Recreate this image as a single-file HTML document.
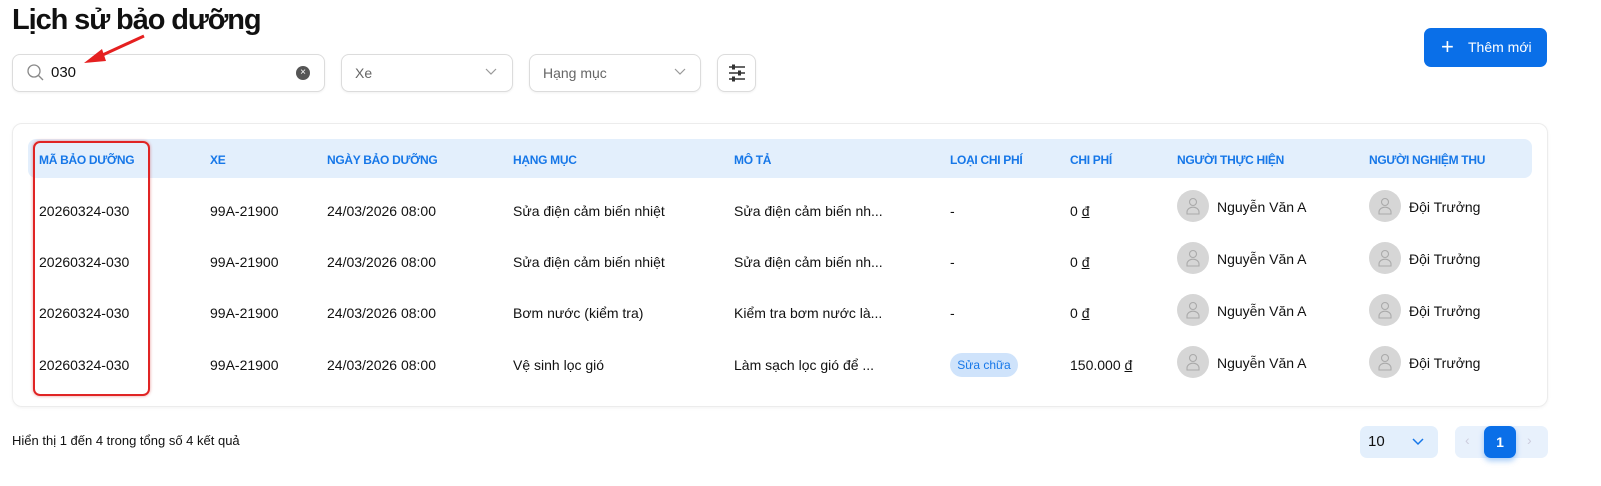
<!DOCTYPE html><html><head><meta charset="utf-8"><style>
*{box-sizing:border-box;margin:0;padding:0}
body{width:1601px;height:486px;background:#fff;font-family:"Liberation Sans",sans-serif;color:#1a1a1a;position:relative;overflow:hidden}
.a{position:absolute}
h1{position:absolute;left:12px;top:4px;font-size:29px;font-weight:bold;letter-spacing:-1.1px;color:#111}
.box{position:absolute;border:1.5px solid #dcdcdc;border-radius:8px;background:#fff;box-shadow:0 1px 2px rgba(0,0,0,.06)}
.ph{font-size:14px;color:#666}
.hd{font-size:12px;font-weight:bold;letter-spacing:-0.3px;color:#1677e8;position:absolute;top:153px}
.c{position:absolute;font-size:14px;color:#111}
.av{position:absolute;width:32px;height:32px;border-radius:50%;background:#d6d6d6}
.av svg{position:absolute;left:8px;top:7px}
</style></head><body>
<h1>Lịch sử bảo dưỡng</h1>
<div class="box" style="left:12px;top:54px;width:313px;height:38px"></div>
<svg class="a" style="left:26px;top:63px" width="20" height="20" viewBox="0 0 20 20"><circle cx="8" cy="8" r="6" fill="none" stroke="#888" stroke-width="1.3"/><path d="M12.5 12.5L17 17" stroke="#888" stroke-width="1.3"/></svg>
<div class="c" style="left:51px;top:64px;font-size:15px">030</div>
<div class="a" style="left:296px;top:66px;width:14px;height:14px;border-radius:50%;background:#555;color:#fff;font-size:10px;text-align:center;line-height:14px">×</div>
<div class="box" style="left:341px;top:54px;width:172px;height:38px"></div>
<div class="a ph" style="left:355px;top:65px">Xe</div>
<svg class="a" style="left:485px;top:68px" width="12" height="8"><path d="M1 1l5 5 5-5" fill="none" stroke="#999" stroke-width="1.2"/></svg>
<div class="box" style="left:529px;top:54px;width:172px;height:38px"></div>
<div class="a ph" style="left:543px;top:65px">Hạng mục</div>
<svg class="a" style="left:674px;top:68px" width="12" height="8"><path d="M1 1l5 5 5-5" fill="none" stroke="#999" stroke-width="1.2"/></svg>
<div class="box" style="left:717px;top:54px;width:39px;height:38px"></div>
<svg class="a" style="left:727px;top:63px" width="20" height="20"><g stroke="#333" stroke-width="1.5"><path d="M2 4h16M2 10h16M2 16h16"/></g><g fill="#333"><rect x="5" y="1.5" width="3" height="5"/><rect x="11" y="7.5" width="3" height="5"/><rect x="5" y="13.5" width="3" height="5"/></g></svg>
<div class="a" style="left:1424px;top:28px;width:123px;height:39px;background:#0a6fe8;border-radius:7px;color:#fff;font-size:14px;line-height:39px"><span style="position:absolute;left:17px;top:-1px;font-size:22px">+</span><span style="position:absolute;left:44px">Thêm mới</span></div>
<div class="a" style="left:12px;top:123px;width:1536px;height:284px;border:1px solid #ececec;border-radius:10px;box-shadow:0 1px 3px rgba(0,0,0,.05)"></div>
<div class="a" style="left:28px;top:139px;width:1504px;height:39px;background:#e3effc;border-radius:8px"></div>
<div class="hd" style="left:39px">MÃ BẢO DƯỠNG</div><div class="hd" style="left:210px">XE</div><div class="hd" style="left:327px">NGÀY BẢO DƯỠNG</div><div class="hd" style="left:513px">HẠNG MỤC</div><div class="hd" style="left:734px">MÔ TẢ</div><div class="hd" style="left:950px">LOẠI CHI PHÍ</div><div class="hd" style="left:1070px">CHI PHÍ</div><div class="hd" style="left:1177px">NGƯỜI THỰC HIỆN</div><div class="hd" style="left:1369px">NGƯỜI NGHIỆM THU</div>
<div class="c" style="left:39px;top:203px">20260324-030</div><div class="c" style="left:210px;top:203px">99A-21900</div><div class="c" style="left:327px;top:203px">24/03/2026 08:00</div><div class="c" style="left:513px;top:203px">Sửa điện cảm biến nhiệt</div><div class="c" style="left:734px;top:203px">Sửa điện cảm biến nh...</div><div class="c" style="left:950px;top:203px">-</div><div class="c" style="left:1070px;top:203px">0 <u>đ</u></div>
<div class="c" style="left:39px;top:254px">20260324-030</div><div class="c" style="left:210px;top:254px">99A-21900</div><div class="c" style="left:327px;top:254px">24/03/2026 08:00</div><div class="c" style="left:513px;top:254px">Sửa điện cảm biến nhiệt</div><div class="c" style="left:734px;top:254px">Sửa điện cảm biến nh...</div><div class="c" style="left:950px;top:254px">-</div><div class="c" style="left:1070px;top:254px">0 <u>đ</u></div>
<div class="c" style="left:39px;top:305px">20260324-030</div><div class="c" style="left:210px;top:305px">99A-21900</div><div class="c" style="left:327px;top:305px">24/03/2026 08:00</div><div class="c" style="left:513px;top:305px">Bơm nước (kiểm tra)</div><div class="c" style="left:734px;top:305px">Kiểm tra bơm nước là...</div><div class="c" style="left:950px;top:305px">-</div><div class="c" style="left:1070px;top:305px">0 <u>đ</u></div>
<div class="c" style="left:39px;top:357px">20260324-030</div><div class="c" style="left:210px;top:357px">99A-21900</div><div class="c" style="left:327px;top:357px">24/03/2026 08:00</div><div class="c" style="left:513px;top:357px">Vệ sinh lọc gió</div><div class="c" style="left:734px;top:357px">Làm sạch lọc gió để ...</div><div class="a" style="left:950px;top:353px;width:68px;height:24px;border-radius:12px;background:#cfe3fb;color:#1677e8;font-size:12px;text-align:center;line-height:24px">Sửa chữa</div><div class="c" style="left:1070px;top:357px">150.000 <u>đ</u></div>
<svg width="0" height="0" style="position:absolute"><defs><g id="p"><circle cx="8" cy="5" r="3.5" fill="none" stroke="#aaa" stroke-width="1.1"/><path d="M2 17v-2a5 4 0 0 1 12 0v2z" fill="none" stroke="#aaa" stroke-width="1.1"/></g></defs></svg>
<div class="av" style="left:1177px;top:190px"><svg width="16" height="18"><use href="#p"/></svg></div><div class="c" style="left:1217px;top:199px">Nguyễn Văn A</div><div class="av" style="left:1369px;top:190px"><svg width="16" height="18"><use href="#p"/></svg></div><div class="c" style="left:1409px;top:199px">Đội Trưởng</div>
<div class="av" style="left:1177px;top:242px"><svg width="16" height="18"><use href="#p"/></svg></div><div class="c" style="left:1217px;top:251px">Nguyễn Văn A</div><div class="av" style="left:1369px;top:242px"><svg width="16" height="18"><use href="#p"/></svg></div><div class="c" style="left:1409px;top:251px">Đội Trưởng</div>
<div class="av" style="left:1177px;top:294px"><svg width="16" height="18"><use href="#p"/></svg></div><div class="c" style="left:1217px;top:303px">Nguyễn Văn A</div><div class="av" style="left:1369px;top:294px"><svg width="16" height="18"><use href="#p"/></svg></div><div class="c" style="left:1409px;top:303px">Đội Trưởng</div>
<div class="av" style="left:1177px;top:346px"><svg width="16" height="18"><use href="#p"/></svg></div><div class="c" style="left:1217px;top:355px">Nguyễn Văn A</div><div class="av" style="left:1369px;top:346px"><svg width="16" height="18"><use href="#p"/></svg></div><div class="c" style="left:1409px;top:355px">Đội Trưởng</div>
<div class="a" style="left:33px;top:141px;width:117px;height:255px;border:2.5px solid #e02424;border-radius:7px;box-shadow:0 0 3px rgba(200,0,0,.4)"></div>
<svg class="a" style="left:80px;top:30px" width="70" height="40"><path d="M64 6L16 28" stroke="#e52020" stroke-width="3"/><path d="M4 33L22 19L26 31z" fill="#e52020"/></svg>
<div class="c" style="left:12px;top:433px;font-size:13px">Hiển thị 1 đến 4 trong tổng số 4 kết quả</div>
<div class="a" style="left:1360px;top:426px;width:78px;height:32px;background:#e3effc;border-radius:7px"></div>
<div class="c" style="left:1368px;top:433px;font-size:15px">10</div>
<svg class="a" style="left:1412px;top:438px" width="12" height="8"><path d="M1 1l5 5 5-5" fill="none" stroke="#1677e8" stroke-width="1.5"/></svg>
<div class="a" style="left:1455px;top:426px;width:93px;height:32px;background:#e8f1fc;border-radius:7px"></div>
<div class="a" style="left:1484px;top:426px;width:32px;height:32px;background:#0a6fe8;border-radius:7px;color:#fff;font-size:14px;font-weight:bold;text-align:center;line-height:32px;box-shadow:0 3px 6px rgba(10,111,232,.35)">1</div>
<div class="a" style="left:1465px;top:432px;color:#ccd;font-size:14px">‹</div><div class="a" style="left:1527px;top:432px;color:#ccd;font-size:14px">›</div>
</body></html>
